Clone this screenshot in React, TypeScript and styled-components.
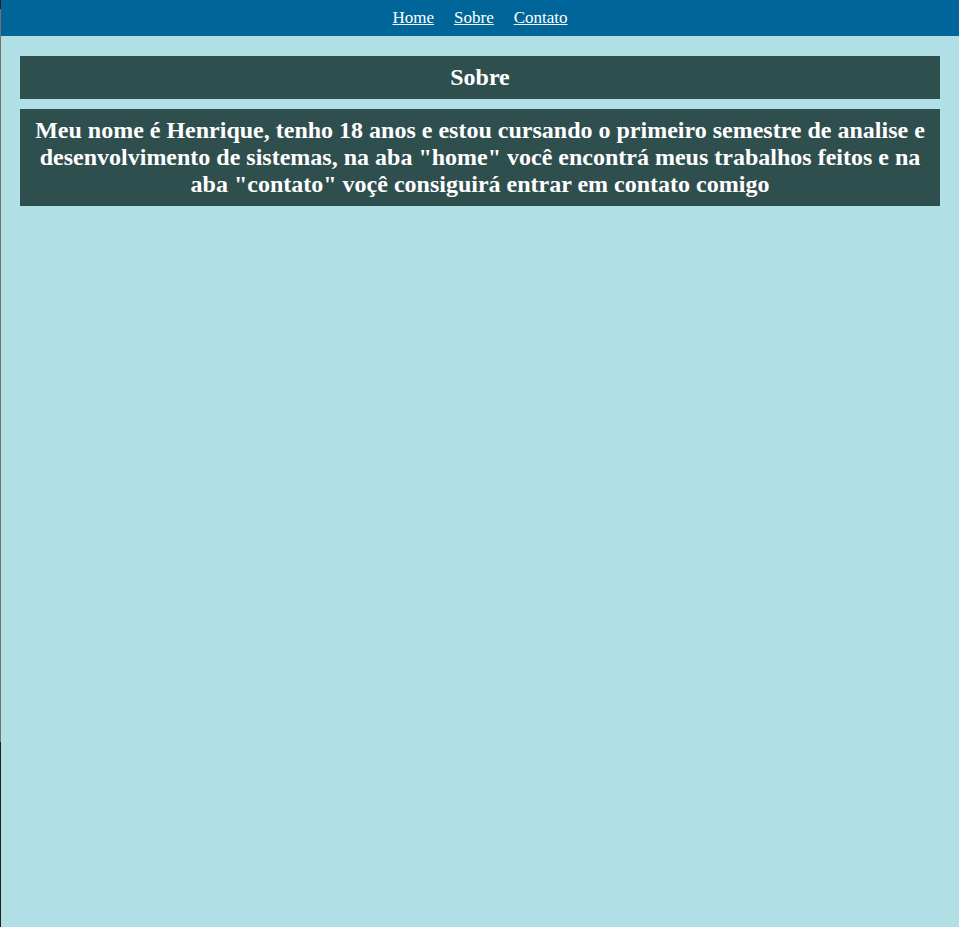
import React from "react";
import styled, { createGlobalStyle } from "styled-components";

const GlobalStyle = createGlobalStyle`
  * { box-sizing: border-box; margin: 0; padding: 0; }
  body {
    background: #b0e0e6;
    color: #fff;
    font-family: "Liberation Serif", "Times New Roman", serif;
    font-size: 17px;
  }
`;

const Page = styled.div`
  min-height: 100vh;
  padding-left: 1px;
  background: linear-gradient(#222 1%, #777070 1% 80%, #222 80%) left / 1px 100% no-repeat;
`;

const Nav = styled.nav`
  display: flex;
  justify-content: center;
  gap: 20px;
  padding: 9px;
  background: #006699;
`;

const NavLink = styled.a`
  color: #fff;
  line-height: 18px;
  text-decoration: underline;
`;

const Content = styled.main`
  display: flex;
  flex-direction: column;
  gap: 10px;
  padding: 20px 19px;
`;

const Title = styled.h1`
  padding: 8px 10px;
  background: #2f4f4f;
  font-size: 24px;
  line-height: 27px;
  text-align: center;
`;

const Description = styled(Title).attrs({ as: "h2" })``;

export default function App() {
  return (
    <>
      <GlobalStyle />
      <Page>
        <Nav>
          <NavLink href="#home">Home</NavLink>
          <NavLink href="#sobre">Sobre</NavLink>
          <NavLink href="#contato">Contato</NavLink>
        </Nav>
        <Content>
          <Title>Sobre</Title>
          <Description>
            Meu nome é Henrique, tenho 18 anos e estou cursando o primeiro semestre de analise e
            desenvolvimento de sistemas, na aba "home" você encontrá meus trabalhos feitos e na
            aba "contato" voçê consiguirá entrar em contato comigo
          </Description>
        </Content>
      </Page>
    </>
  );
}
